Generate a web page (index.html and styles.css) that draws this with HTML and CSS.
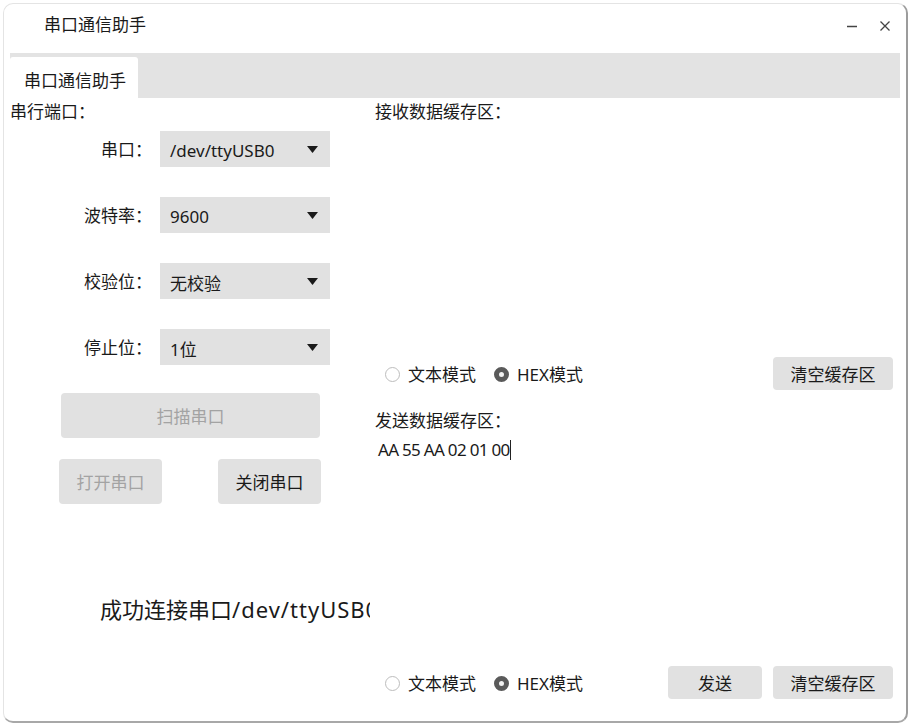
FILE: index.html
```html
<!DOCTYPE html>
<html lang="zh-CN">
<head>
<meta charset="utf-8">
<title>串口通信助手</title>
<link rel="stylesheet" href="styles.css">
</head>
<body>
<div class="window">
  <div class="titlebar">
    <span class="title">串口通信助手</span>
    <div class="controls">
      <svg class="ctl" width="14" height="14" viewBox="0 0 14 14"><path d="M2 7.5 H12" stroke="#444" stroke-width="1.4"/></svg>
      <svg class="ctl" width="14" height="14" viewBox="0 0 14 14"><path d="M2.5 2.5 L11.5 11.5 M11.5 2.5 L2.5 11.5" stroke="#444" stroke-width="1.3"/></svg>
    </div>
  </div>
  <div class="tabbar"><div class="tab">串口通信助手</div></div>
  <div class="content">
    <div class="left">
      <div class="section-label">串行端口：</div>
      <div class="form">
        <div class="flabel">串口：</div>
        <div class="combo"><span>/dev/ttyUSB0</span><svg width="11" height="7" viewBox="0 0 11 7"><path d="M0 0 H11 L5.5 7 Z" fill="#1a1a1a"/></svg></div>
        <div class="flabel">波特率：</div>
        <div class="combo"><span>9600</span><svg width="11" height="7" viewBox="0 0 11 7"><path d="M0 0 H11 L5.5 7 Z" fill="#1a1a1a"/></svg></div>
        <div class="flabel">校验位：</div>
        <div class="combo"><span>无校验</span><svg width="11" height="7" viewBox="0 0 11 7"><path d="M0 0 H11 L5.5 7 Z" fill="#1a1a1a"/></svg></div>
        <div class="flabel">停止位：</div>
        <div class="combo"><span>1位</span><svg width="11" height="7" viewBox="0 0 11 7"><path d="M0 0 H11 L5.5 7 Z" fill="#1a1a1a"/></svg></div>
      </div>
      <div class="btn scan disabled">扫描串口</div>
      <div class="btnrow">
        <div class="btn port disabled">打开串口</div>
        <div class="btn port">关闭串口</div>
      </div>
      <div class="status">成功连接串口<span class="path">/dev/ttyUSB0</span></div>
    </div>
    <div class="right">
      <div class="section-label">接收数据缓存区：</div>
      <div class="recv-area"></div>
      <div class="toolrow">
        <div class="radios">
          <span class="radio"><span class="dot"></span>文本模式</span>
          <span class="radio"><span class="dot on"></span>HEX模式</span>
        </div>
        <div class="btn small wide">清空缓存区</div>
      </div>
      <div class="section-label send-label">发送数据缓存区：</div>
      <div class="send-area"><span class="hex">AA 55 AA 02 01 00</span><span class="caret"></span></div>
      <div class="toolrow bottom">
        <div class="radios">
          <span class="radio"><span class="dot"></span>文本模式</span>
          <span class="radio"><span class="dot on"></span>HEX模式</span>
        </div>
        <div class="btn small send">发送</div>
        <div class="btn small wide">清空缓存区</div>
      </div>
    </div>
  </div>
</div>
</body>
</html>
```

FILE: styles.css
```css
* { box-sizing: border-box; }
html, body { margin: 0; padding: 0; background: #ffffff; }
body {
  font-family: "Noto Sans", "Noto Sans CJK SC", sans-serif;
  font-size: 17px;
  color: #1a1a1a;
}
.window {
  margin: 3px;
  width: 905px;
  height: 720px;
  border: 1px solid #e4e4e4;
  border-right: 2px solid #9c9c9c;
  border-bottom: 2px solid #a8a8a8;
  border-radius: 10px;
  display: flex;
  flex-direction: column;
  overflow: hidden;
  background: #fff;
}
.titlebar {
  height: 49px;
  flex: none;
  display: flex;
  align-items: flex-start;
  justify-content: space-between;
  padding: 10px 12px 0 40px;
}
.title { line-height: 22px; }
.controls { display: flex; gap: 19px; padding-top: 5px; padding-right: 2px; }
.ctl { display: block; }
.tabbar {
  flex: none;
  height: 45px;
  margin: 0 6px;
  background: #e3e3e3;
  display: flex;
  align-items: flex-end;
}
.tab {
  width: 128px;
  height: 41px;
  background: #ffffff;
  border-radius: 3px 3px 0 0;
  padding-left: 14px;
  padding-top: 4px;
  display: flex;
  align-items: center;
}
.content {
  flex: 1;
  display: flex;
  min-height: 0;
}
.left {
  width: 365px;
  margin-left: 6px;
  flex: none;
  display: flex;
  flex-direction: column;
}
.section-label {
  margin-top: 4px;
  line-height: 20px;
  height: 20px;
  white-space: nowrap;
}
.form {
  margin-top: 9px;
  display: grid;
  grid-template-columns: 142px 170px;
  grid-auto-rows: 36px;
  column-gap: 8px;
  row-gap: 30px;
}
.flabel {
  text-align: right;
  align-self: center;
  line-height: 20px;
  padding-top: 1px;
  white-space: nowrap;
}
.combo {
  background: #e1e1e1;
  display: flex;
  align-items: center;
  justify-content: space-between;
  padding: 2px 12px 0 10px;
}
.combo svg { display: block; margin-top: -2px; }
.btn {
  background: #e1e1e1;
  border-radius: 4px;
  display: flex;
  align-items: center;
  justify-content: center;
  color: #1a1a1a;
  white-space: nowrap;
}
.btn.disabled { color: #a3a3a3; }
.scan {
  margin-top: 28px;
  margin-left: 51px;
  width: 259px;
  height: 45px;
}
.btnrow {
  margin-top: 21px;
  margin-left: 49px;
  display: flex;
  gap: 56px;
}
.port { width: 103px; height: 45px; }
.status {
  margin-top: 90px;
  margin-left: 90px;
  width: 270px;
  overflow: hidden;
  white-space: nowrap;
  font-size: 22px;
  line-height: 30px;
}
.path { letter-spacing: 1px; }
.right {
  width: 518px;
  flex: none;
  display: flex;
  flex-direction: column;
}
.recv-area { height: 235px; flex: none; }
.toolrow {
  height: 33px;
  flex: none;
  display: flex;
  align-items: center;
}
.radios {
  display: flex;
  align-items: center;
  gap: 18px;
  padding-left: 10px;
  margin-right: auto;
  padding-top: 2px;
}
.radio {
  display: flex;
  align-items: center;
  gap: 8px;
  line-height: 20px;
}
.dot {
  width: 15px;
  height: 15px;
  border-radius: 50%;
  border: 1px solid #bdbdbd;
  background: #fff;
  flex: none;
}
.dot.on {
  border: 5px solid #5a5a5a;
  background: #f2f2f2;
}
.btn.small { height: 33px; }
.btn.wide { width: 120px; }
.btn.send { width: 94px; margin-right: 11px; }
.send-label { margin-top: 21px; }
.send-area {
  flex: 1;
  padding-top: 9px;
  padding-left: 3px;
  display: flex;
  align-items: flex-start;
}
.hex { line-height: 20px; letter-spacing: -0.7px; }
.caret {
  width: 1px;
  height: 20px;
  background: #222;
  margin-left: 1px;
}
.toolrow.bottom { margin-bottom: 22px; }
```
